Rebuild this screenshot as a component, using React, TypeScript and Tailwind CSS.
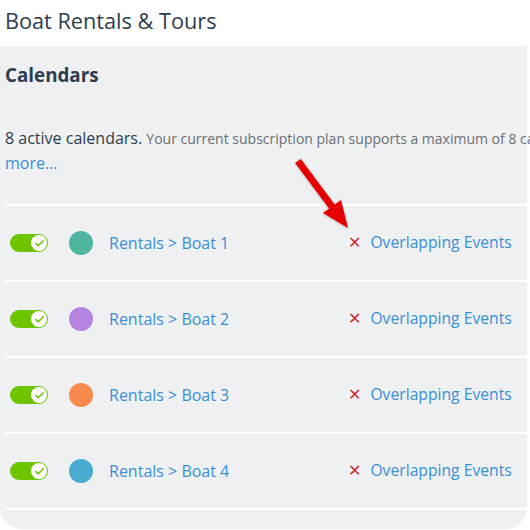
import { Check } from 'lucide-react'

const calendars = [
  { name: 'Rentals > Boat 1', color: 'bg-[#4fb5a1]' },
  { name: 'Rentals > Boat 2', color: 'bg-[#b584e0]' },
  { name: 'Rentals > Boat 3', color: 'bg-[#f78b4d]' },
  { name: 'Rentals > Boat 4', color: 'bg-[#4aabd0]' },
]

function Toggle() {
  return (
    <div className="w-[38px] h-[18px] rounded-full bg-[#6dc501] flex items-center justify-end pr-[1px]">
      <div className="w-[16px] h-[16px] rounded-full bg-white flex items-center justify-center">
        <Check className="w-[11px] h-[11px] text-[#6dc501]" strokeWidth={3.5} />
      </div>
    </div>
  )
}

export default function App() {
  return (
    <div className="relative w-[530px] h-[530px] overflow-hidden bg-white font-['Open_Sans',sans-serif]">
      {/* Page title */}
      <div className="h-[46px] flex items-center px-[5px]">
        <h1 className="text-[21.7px] text-[#2c3d4d] leading-none -mt-[4px]">Boat Rentals &amp; Tours</h1>
      </div>

      {/* Calendars panel */}
      <div className="w-[527px] h-[483px] bg-[#eff0f2] rounded-b-[22px] pl-[5px]">
        <h2 className="pt-[17px] text-[18.8px] font-bold text-[#2c3d4d] leading-[24px]">Calendars</h2>

        <div className="mt-[39px] leading-[24px] whitespace-nowrap">
          <span className="text-[16px] text-[#2c3d4d]">8 active calendars.</span>{' '}
          <span className="text-[14px] text-[#6b6f74]">
            Your current subscription plan supports a maximum of 8 calendars.
          </span>
        </div>
        <div className="text-[16px] text-[#3a8fd9] leading-[24px]">more...</div>

        <div className="mt-[29px]">
          {calendars.map((c) => (
            <div key={c.name} className="border-t-2 border-white h-[76px] flex items-center">
              <div className="pl-[5px] w-[64px]">
                <Toggle />
              </div>
              <div className={`w-[24px] h-[24px] rounded-full ${c.color}`} />
              <span className="ml-[16px] w-[239px] text-[16px] text-[#3a8fd9]">{c.name}</span>
              <span className="text-[#d6262b] text-[16px] leading-none font-bold font-['DejaVu_Sans',sans-serif]">✕</span>
              <span className="ml-[9px] text-[15.7px] text-[#3a8fd9]">Overlapping Events</span>
            </div>
          ))}
          <div className="border-t-2 border-white" />
        </div>
      </div>

      {/* Annotation arrow */}
      <svg className="absolute left-0 top-0 pointer-events-none" width="530" height="530">
        <defs>
          <filter id="sh" x="-20%" y="-20%" width="140%" height="140%">
            <feDropShadow dx="0" dy="0.5" stdDeviation="0.8" floodColor="#000" floodOpacity="0.35" />
          </filter>
        </defs>
        <g filter="url(#sh)">
          <line x1="298" y1="161" x2="333" y2="208" stroke="#e60000" strokeWidth="7" strokeLinecap="butt" />
          <polygon points="348,228 323,213 341,200" fill="#e60000" />
        </g>
      </svg>
    </div>
  )
}
